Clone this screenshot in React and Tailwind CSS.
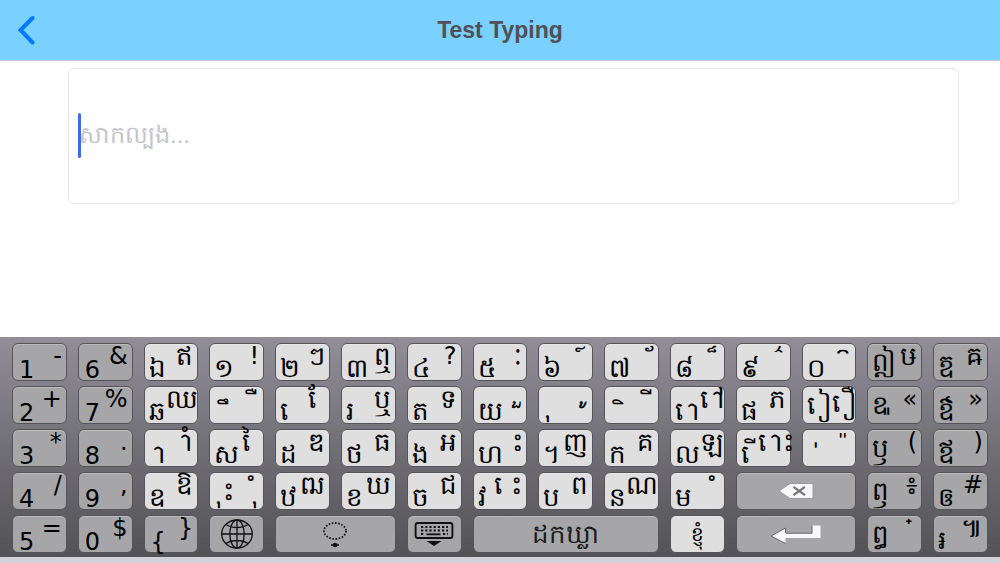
import clsx from 'clsx';

const NB = '\u00A0';

// low = plain label, high = shifted label, dark = grey side key
// combining vowels and signs sit on a no-break space
const rows = [
  [
    { low: '1', high: '-', dark: true },
    { low: '6', high: '&', dark: true },
    { low: 'ឯ', high: 'ឥ' },
    { low: '១', high: '!' },
    { low: '២', high: 'ៗ' },
    { low: '៣', high: 'ឮ' },
    { low: '៤', high: '?' },
    { low: '៥', high: NB + '\u17C8' },
    { low: '៦', high: NB + '\u17CD' },
    { low: '៧', high: NB + '\u17D0' },
    { low: '៨', high: NB + '\u17CF' },
    { low: '៩', high: NB + '\u17CC' },
    { low: '០', high: NB + '\u17DD' },
    { low: 'ឦ', high: 'ឞ', dark: true },
    { low: 'ឨ', high: 'ឝ', dark: true },
  ],
  [
    { low: '2', high: '+', dark: true },
    { low: '7', high: '%', dark: true },
    { low: 'ឆ', high: 'ឈ' },
    { low: NB + '\u17B9', high: NB + '\u17BA' },
    { low: NB + '\u17C1', high: NB + '\u17C2' },
    { low: 'រ', high: 'ឬ' },
    { low: 'ត', high: 'ទ' },
    { low: 'យ', high: NB + '\u17BD' },
    { low: NB + '\u17BB', high: NB + '\u17BC' },
    { low: NB + '\u17B7', high: NB + '\u17B8' },
    { low: NB + '\u17C4', high: NB + '\u17C5' },
    { low: 'ផ', high: 'ភ' },
    { low: NB + '\u17C0', high: NB + '\u17BF' },
    { low: 'ឩ', high: '«', dark: true },
    { low: 'ឳ', high: '»', dark: true },
  ],
  [
    { low: '3', high: '*', dark: true },
    { low: '8', high: '.', dark: true },
    { low: NB + '\u17B6', high: NB + '\u17B6\u17C6' },
    { low: 'ស', high: NB + '\u17C3' },
    { low: 'ដ', high: 'ឌ' },
    { low: 'ថ', high: 'ធ' },
    { low: 'ង', high: 'អ' },
    { low: 'ហ', high: NB + '\u17C7' },
    { low: '។', high: 'ញ' },
    { low: 'ក', high: 'គ' },
    { low: 'ល', high: 'ឡ' },
    { low: NB + '\u17BE', high: NB + '\u17C4\u17C7' },
    { low: NB + '\u17CB', high: NB + '\u17C9' },
    { low: 'ឫ', high: '(', dark: true },
    { low: 'ឪ', high: ')', dark: true },
  ],
  [
    { low: '4', high: '/', dark: true },
    { low: '9', high: ',', dark: true },
    { low: 'ឧ', high: 'ឱ' },
    { low: NB + '\u17BB\u17C7', high: NB + '\u17BB\u17C6' },
    { low: 'ឋ', high: 'ឍ' },
    { low: 'ខ', high: 'ឃ' },
    { low: 'ច', high: 'ជ' },
    { low: 'វ', high: NB + '\u17C1\u17C7' },
    { low: 'ប', high: 'ព' },
    { low: 'ន', high: 'ណ' },
    { low: 'ម', high: NB + '\u17C6' },
    { action: 'delete', dark: true, span: 'col-span-2' },
    { low: 'ឭ', high: '៖', dark: true },
    { low: 'ឲ', high: '#', dark: true },
  ],
  [
    { low: '5', high: '=', dark: true },
    { low: '0', high: '$', dark: true },
    { low: '{', high: '}', dark: true },
    { action: 'globe', dark: true },
    { action: 'coeng', dark: true, span: 'col-span-2' },
    { action: 'hide', dark: true },
    { action: 'space', dark: true, span: 'col-span-3' },
    { action: 'word' },
    { action: 'return', dark: true, span: 'col-span-2' },
    { low: 'ឰ', high: NB + '\u17CE', dark: true },
    { low: '៛', high: '៕', dark: true },
  ],
];

const LATIN = /^[!-~«»]$/;
const ABOVE = /^\u00A0([\u17B7-\u17BA\u17C6\u17C9-\u17D0\u17DD]|\u17BB\u17C6)$/;
const BELOW = /^\u00A0[\u17BB-\u17BD]\u17C7?$/;
// letters with a deep foot
const DEEP = /^([ឦឩឫឭឰ]|\u00A0\u17C0)$/;

function BackIcon() {
  return (
    <svg viewBox="0 0 18 30" className="h-[30px] w-[18px]" fill="none" stroke="#007aff" strokeWidth="4" strokeLinecap="round">
      <path d="M15.5 3 3.5 15 15.5 27.5" />
    </svg>
  );
}

function GlobeIcon() {
  return (
    <svg viewBox="0 0 32 30" className="h-[30px] w-8" fill="none" stroke="#111" strokeWidth="1.3">
      <ellipse cx="16" cy="15" rx="15.3" ry="14" />
      <ellipse cx="16" cy="15" rx="7.2" ry="14" />
      <path d="M16 1v28M.7 15h30.6M5 5.5c6 4 16 4 22 0M5 24.5c6-4 16-4 22 0" />
    </svg>
  );
}

function CoengIcon() {
  return (
    <svg viewBox="0 0 26 28" className="h-7 w-[26px]" fill="none" stroke="#111">
      <ellipse cx="13" cy="11" rx="11" ry="8" strokeWidth="1.8" strokeDasharray="1.6 1.6" />
      <path d="M9 25h8" strokeWidth="1.5" />
      <circle cx="13" cy="25" r="2.3" fill="#111" stroke="none" />
    </svg>
  );
}

function HideIcon() {
  return (
    <svg viewBox="0 0 40 26" className="h-[26px] w-10">
      <rect x="1.6" y="2" width="36.8" height="15" rx="2" fill="none" stroke="#111" strokeWidth="1.9" />
      <path d="M7 6h27M7 9.5h27M7 13h4M29 13h5" stroke="#111" strokeWidth="1.8" strokeDasharray="2.2 2" />
      <path d="M12.5 13.3h14" stroke="#111" strokeWidth="1.8" />
      <path d="M12.5 20h15L20 25z" fill="#111" />
    </svg>
  );
}

function DeleteIcon() {
  return (
    <svg viewBox="0 0 36 18" className="h-[18px] w-9">
      <path d="M1 9 12 1.5h23v15H12z" fill="#f8f8fa" stroke="#999" />
      <path d="m15.5 4.8 11.5 8.4M27 4.8 15.5 13.2" stroke="#777" strokeWidth="2.2" />
    </svg>
  );
}

function ReturnIcon() {
  return (
    <svg viewBox="0 0 52 20" className="h-5 w-[52px]">
      <path d="M1 12 15.5 4v5.2H42V1.5h8.5V14h-35v5.5z" fill="#f8f8fa" />
      <path d="M15.5 9V4L1 12l14.5 7.5M16 9.2h26V1.5" fill="none" stroke="#666" />
    </svg>
  );
}

const actions = {
  delete: { label: 'Delete', face: <DeleteIcon /> },
  globe: { label: 'Next keyboard', face: <GlobeIcon /> },
  coeng: { label: 'Subscript', face: <CoengIcon /> },
  hide: { label: 'Hide keyboard', face: <HideIcon /> },
  space: { label: 'Space', face: <span className="text-[26px] leading-8 text-[#1c1c1e]">ដកឃ្លា</span> },
  word: { label: 'Word', face: <span className="text-xl leading-6">ខ្ញុំ</span> },
  return: { label: 'Return', face: <ReturnIcon /> },
};

function Key({ item }) {
  const base = clsx(
    'flex h-[38px] min-w-0 rounded-md border border-[#55545a] text-black shadow-[inset_0_1px_0_rgba(255,255,255,0.25)]',
    item.dark ? 'bg-[#a6a6a8]' : 'bg-[#dfdfdf]',
    item.span
  );

  if (item.action) {
    const { label, face } = actions[item.action];
    return (
      <button type="button" aria-label={label} className={clsx(base, 'items-center justify-center')}>
        {face}
      </button>
    );
  }

  const { low, high } = item;
  return (
    <button type="button" className={clsx(base, 'justify-between px-1')}>
      <span
        className={clsx(
          'self-end leading-5',
          LATIN.test(low) ? 'pl-0.5 text-2xl leading-5' : 'pb-0.5 text-[26px] leading-5',
          ABOVE.test(low) && 'translate-y-1 pl-2',
          BELOW.test(low) && 'pb-2',
          DEEP.test(low) && 'pb-2'
        )}
      >
        {low}
      </span>
      <span
        className={clsx(
          'self-start',
          LATIN.test(high) ? 'text-2xl leading-6' : 'text-[26px] leading-6',
          ABOVE.test(high) && 'pt-1.5',
          BELOW.test(high) && '-mt-2',
          high === NB + '\u17BF' && 'pt-1'
        )}
      >
        {high}
      </span>
    </button>
  );
}

export default function App() {
  return (
    <div className="flex min-h-screen flex-col bg-white font-['Liberation_Sans',sans-serif]">
      <header className="grid h-[61px] grid-cols-[1fr_auto_1fr] items-center border-b border-[#b9cdd9] bg-[#7ad0ff] px-[17px]">
        <button type="button" aria-label="Back" className="justify-self-start">
          <BackIcon />
        </button>
        <h1 className="text-[23px] font-bold text-[#505058]">Test Typing</h1>
      </header>

      <main className="relative mt-[7px] mr-[41px] ml-[68px]">
        <input
          type="text"
          aria-label="Test typing"
          placeholder="សាកល្បង..."
          className="block h-[136px] w-full rounded-md border border-[#e4e4e6] px-2.5 pb-0.5 text-2xl caret-transparent outline-none placeholder:text-[#c5c5ca]"
        />
        <span className="absolute top-[45px] left-2.5 h-[45px] w-[3px] rounded-full bg-[#4169f0]" />
      </main>

      <section className="mt-auto border-b-[6px] border-[#d1d3d9] bg-linear-to-b from-[#918e98] to-[#535256] px-3 pt-1.5 pb-1 font-['DejaVu_Sans',sans-serif]">
        <div className="grid grid-cols-15 gap-x-[11px] gap-y-[5px]">
          {rows.flat().map((item) => (
            <Key key={item.action || item.low + item.high} item={item} />
          ))}
        </div>
      </section>
    </div>
  );
}
